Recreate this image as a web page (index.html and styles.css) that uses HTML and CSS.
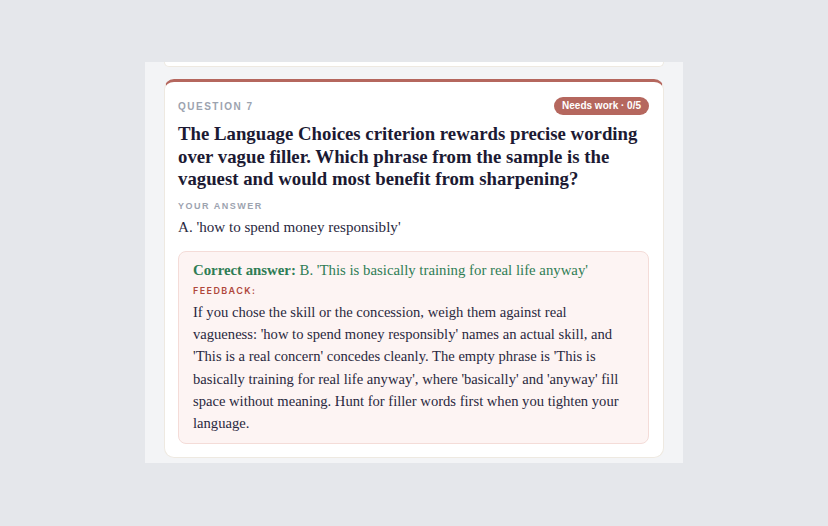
FILE: index.html
```html
<!DOCTYPE html>
<html lang="en">
<head>
<meta charset="utf-8">
<title>Question 7</title>
<link rel="stylesheet" href="styles.css">
</head>
<body>
<div class="panel">
  <div class="prev-card"></div>
  <div class="card">
    <div class="card-head">
      <span class="q-label">QUESTION 7</span>
      <span class="badge">Needs work · 0/5</span>
    </div>
    <h2 class="question">The Language Choices criterion rewards precise wording over vague filler. Which phrase from the sample is the vaguest and would most benefit from sharpening?</h2>
    <div class="sub-label">YOUR ANSWER</div>
    <div class="answer">A. 'how to spend money responsibly'</div>
    <div class="feedback">
      <div class="correct"><strong>Correct answer:</strong> B. 'This is basically training for real life anyway'</div>
      <div class="fb-label">FEEDBACK:</div>
      <p class="fb-text">If you chose the skill or the concession, weigh them against real vagueness: 'how to spend money responsibly' names an actual skill, and 'This is a real concern' concedes cleanly. The empty phrase is 'This is basically training for real life anyway', where 'basically' and 'anyway' fill space without meaning. Hunt for filler words first when you tighten your language.</p>
    </div>
  </div>
</div>
</body>
</html>
```
FILE: styles.css
```css
html, body {
  margin: 0;
  padding: 0;
}
body {
  background: #e5e7eb;
  height: 526px;
  padding-top: 62px;
  box-sizing: border-box;
  font-family: "Liberation Serif", serif;
}
.panel {
  width: 538px;
  height: 401px;
  margin: 0 auto;
  background: #f3f4f6;
  padding: 0 19px 5px;
  box-sizing: border-box;
  overflow: hidden;
}
.prev-card {
  height: 4px;
  background: #fff;
  border: 1px solid #eee9e1;
  border-top: none;
  border-radius: 0 0 10px 10px;
}
.card {
  margin-top: 12px;
  background: #fff;
  border: 1px solid #eee9e1;
  border-top: 3px solid #b5675e;
  border-radius: 10px;
  padding: 15px 14px 13px 13px;
}
.card-head {
  display: flex;
  justify-content: space-between;
  align-items: center;
  height: 18px;
}
.q-label {
  font-family: "Liberation Sans", Arial, sans-serif;
  font-weight: 700;
  font-size: 10px;
  letter-spacing: 1.5px;
  color: #9ca3af;
}
.badge {
  font-family: "Liberation Sans", Arial, sans-serif;
  font-weight: 700;
  font-size: 10px;
  color: #fff;
  background: #b5675e;
  border-radius: 9px;
  height: 18px;
  line-height: 18px;
  padding: 0 8px;
}
.question {
  margin: 8px 0 0;
  font-family: "Liberation Serif", serif;
  font-weight: 700;
  font-size: 18.8px;
  line-height: 22.5px;
  color: #1c1a33;
}
.sub-label {
  margin-top: 9.5px;
  font-family: "Liberation Sans", Arial, sans-serif;
  font-weight: 700;
  font-size: 9px;
  line-height: 12px;
  letter-spacing: 1.5px;
  color: #9ca3af;
}
.answer {
  margin-top: 5px;
  font-size: 15.1px;
  line-height: 20px;
  color: #2a2840;
}
.feedback {
  margin-top: 14px;
  background: #fdf4f3;
  border: 1px solid #f4dcd8;
  border-radius: 8px;
  padding: 8px 14px 9px;
}
.correct {
  font-size: 14.8px;
  line-height: 20px;
  color: #2f7d55;
}
.correct strong {
  font-weight: 700;
}
.fb-label {
  margin-top: 5px;
  font-family: Inter, "Liberation Sans", sans-serif;
  font-weight: 600;
  font-size: 9px;
  line-height: 12px;
  letter-spacing: 1.4px;
  color: #b0473b;
}
.fb-text {
  margin: 4px 0 0;
  font-size: 14.6px;
  line-height: 22.2px;
  color: #2a2840;
}
```
